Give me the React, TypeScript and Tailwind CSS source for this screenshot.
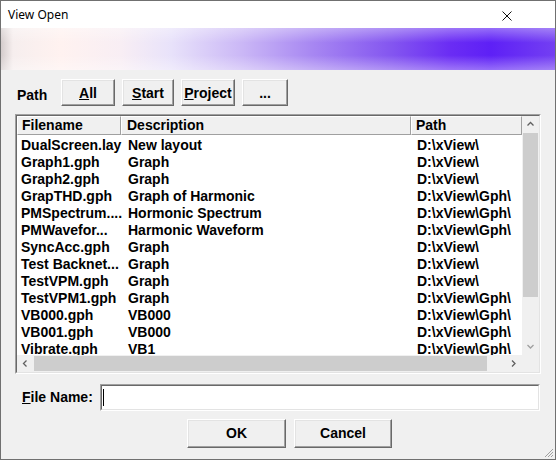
import React from "react";

const rows: [string, string, string][] = [
  ["DualScreen.lay", "New layout", "D:\\xView\\"],
  ["Graph1.gph", "Graph", "D:\\xView\\"],
  ["Graph2.gph", "Graph", "D:\\xView\\"],
  ["GrapTHD.gph", "Graph of Harmonic", "D:\\xView\\Gph\\"],
  ["PMSpectrum....", "Hormonic Spectrum", "D:\\xView\\Gph\\"],
  ["PMWavefor...", "Harmonic Waveform", "D:\\xView\\Gph\\"],
  ["SyncAcc.gph", "Graph", "D:\\xView\\"],
  ["Test Backnet...", "Graph", "D:\\xView\\"],
  ["TestVPM.gph", "Graph", "D:\\xView\\"],
  ["TestVPM1.gph", "Graph", "D:\\xView\\Gph\\"],
  ["VB000.gph", "VB000", "D:\\xView\\Gph\\"],
  ["VB001.gph", "VB000", "D:\\xView\\Gph\\"],
  ["Vibrate.gph", "VB1", "D:\\xView\\Gph\\"],
];

function Btn({ children, w, h }: { children: React.ReactNode; w: string; h: string }) {
  return (
    <div
      className={`${w} ${h} flex items-center justify-center bg-[#f0f0f0] border border-t-white border-l-white border-r-[#696969] border-b-[#696969] shadow-[inset_-1px_-1px_0_#a0a0a0,inset_1px_1px_0_#e3e3e3] text-[14px] font-bold text-black`}
    >
      {children}
    </div>
  );
}

function Chevron({ dir, color }: { dir: "up" | "down" | "left" | "right"; color: string }) {
  const d =
    dir === "up"
      ? "M1.5 5.5 L4.5 2.5 L7.5 5.5"
      : dir === "down"
      ? "M1.5 3 L4.5 6 L7.5 3"
      : dir === "left"
      ? "M5.5 1.5 L2.5 4.5 L5.5 7.5"
      : "M3 1.5 L6 4.5 L3 7.5";
  return (
    <svg width="9" height="9" viewBox="0 0 9 9">
      <path d={d} fill="none" stroke={color} strokeWidth="1.3" />
    </svg>
  );
}

export default function App() {
  return (
    <div
      className="w-[556px] h-[460px] border border-[#707070] bg-[#f0f0f0] flex flex-col overflow-hidden"
      style={{ fontFamily: "'Liberation Sans', Arial, sans-serif" }}
    >
      {/* Title bar */}
      <div className="h-[27px] bg-white flex items-center justify-between shrink-0">
        <span
          className="ml-[7px] mt-[1px] text-[12px] text-black"
          style={{ fontFamily: "'Noto Sans', 'Open Sans', sans-serif" }}
        >
          View Open
        </span>
        <svg width="10" height="10" viewBox="0 0 10 10" className="mr-[43px] mt-[2px]">
          <path d="M0.5 0.5 L9.5 9.5 M9.5 0.5 L0.5 9.5" stroke="#111" strokeWidth="1" />
        </svg>
      </div>

      {/* Banner */}
      <div className="relative h-[42px] shrink-0 bg-[linear-gradient(to_right,#d4cccc_0px,#f6eeee_12px,#fff2f0_60px,#f8eef4_120px,#e8e2fa_170px,#cbb8f6_240px,#a888f2_310px,#8456f0_390px,#6a2cf4_450px,#5e20f6_490px,#7440f2_556px)]">
        <div className="absolute inset-0 bg-[linear-gradient(to_bottom,rgba(255,255,255,0.35)_0%,rgba(255,255,255,0)_35%,rgba(255,255,255,0)_65%,rgba(255,255,255,0.35)_100%)]" />
      </div>

      {/* Body */}
      <div className="flex-1 flex flex-col">
        {/* Path row */}
        <div className="flex items-center mt-[9px] h-[27px]">
          <span className="ml-[16px] w-[44px] text-[14px] font-bold text-black mt-[6px]">Path</span>
          <div className="flex gap-[7px]">
            <Btn w="w-[54px]" h="h-[27px]">
              <span className="mt-[1px]"><span className="underline">A</span>ll</span>
            </Btn>
            <Btn w="w-[52px]" h="h-[27px]">
              <span className="mt-[1px]"><span className="underline">S</span>tart</span>
            </Btn>
            <Btn w="w-[54px]" h="h-[27px]">
              <span className="mt-[1px]"><span className="underline">P</span>roject</span>
            </Btn>
            <Btn w="w-[46px]" h="h-[27px]">
              <span className="mt-[1px]">...</span>
            </Btn>
          </div>
        </div>

        {/* List box */}
        <div className="ml-[14px] mt-[8px] w-[526px] h-[260px] border border-t-[#a0a0a0] border-l-[#a0a0a0] border-r-white border-b-white">
          <div className="w-full h-full border border-t-[#696969] border-l-[#696969] border-r-[#e3e3e3] border-b-[#e3e3e3] flex flex-col bg-white">
            <div className="flex-1 flex min-h-0">
              <div className="flex-1 overflow-hidden flex flex-col">
                {/* header */}
                <div className="flex h-[19px] shrink-0 text-[14px] font-bold text-black">
                  <div className="w-[104px] bg-[#f0f0f0] border border-t-white border-l-white border-r-[#a0a0a0] border-b-[#a0a0a0] pl-[4px] leading-[16px]">
                    Filename
                  </div>
                  <div className="w-[290px] bg-[#f0f0f0] border border-t-white border-l-white border-r-[#a0a0a0] border-b-[#a0a0a0] pl-[5px] leading-[16px]">
                    Description
                  </div>
                  <div className="flex-1 bg-[#f0f0f0] border border-t-white border-l-white border-r-[#a0a0a0] border-b-[#a0a0a0] pl-[4px] leading-[16px]">
                    Path
                  </div>
                </div>
                {/* rows */}
                <div className="flex flex-col pt-[2px]">
                  {rows.map((r, i) => (
                    <div key={i} className="flex h-[17px] shrink-0 text-[14px] font-bold text-black leading-[17px] whitespace-nowrap">
                      <div className="w-[104px] pl-[4px]">{r[0]}</div>
                      <div className="w-[290px] pl-[7px]">{r[1]}</div>
                      <div className="flex-1 pl-[6px]">{r[2]}</div>
                    </div>
                  ))}
                </div>
              </div>
              {/* vertical scrollbar */}
              <div className="w-[17px] bg-[#f0f0f0] flex flex-col shrink-0">
                <div className="h-[17px] flex items-center justify-center">
                  <Chevron dir="up" color="#606060" />
                </div>
                <div className="h-[164px] mx-[1px] bg-[#cdcdcd]" />
                <div className="flex-1" />
                <div className="h-[17px] flex items-center justify-center">
                  <Chevron dir="down" color="#a0a0a0" />
                </div>
              </div>
            </div>
            {/* horizontal scrollbar */}
            <div className="h-[17px] shrink-0 flex bg-[#f0f0f0]">
              <div className="w-[17px] flex items-center justify-center">
                <Chevron dir="left" color="#606060" />
              </div>
              <div className="w-[453px] my-[1px] bg-[#cdcdcd]" />
              <div className="flex-1" />
              <div className="w-[17px] flex items-center justify-center">
                <Chevron dir="right" color="#606060" />
              </div>
              <div className="w-[17px] bg-[#f0f0f0]" />
            </div>
          </div>
        </div>

        {/* File name row */}
        <div className="flex items-center mt-[10px] h-[27px]">
          <span className="ml-[21px] w-[78px] text-[14px] font-bold text-black">
            <span className="underline">F</span>ile Name:
          </span>
          <div className="w-[440px] h-[27px] border border-t-[#a0a0a0] border-l-[#a0a0a0] border-r-white border-b-white">
            <div className="w-full h-full border border-t-[#696969] border-l-[#696969] border-r-[#e3e3e3] border-b-[#e3e3e3] bg-white flex items-center">
              <div className="ml-[1px] w-[1px] h-[17px] bg-black" />
            </div>
          </div>
        </div>

        {/* OK / Cancel */}
        <div className="flex mt-[8px] ml-[186px] gap-[8px]">
          <Btn w="w-[99px]" h="h-[29px]">OK</Btn>
          <Btn w="w-[98px]" h="h-[29px]">Cancel</Btn>
        </div>

        <div className="flex-1 flex justify-end items-end">
          <svg width="10" height="10" viewBox="0 0 10 10" className="mr-[1px] mb-[1px]">
            <path d="M9 1 L1 9 M9 4 L4 9 M9 7 L7 9" stroke="#a0a0a0" strokeWidth="1" />
          </svg>
        </div>
      </div>
    </div>
  );
}
